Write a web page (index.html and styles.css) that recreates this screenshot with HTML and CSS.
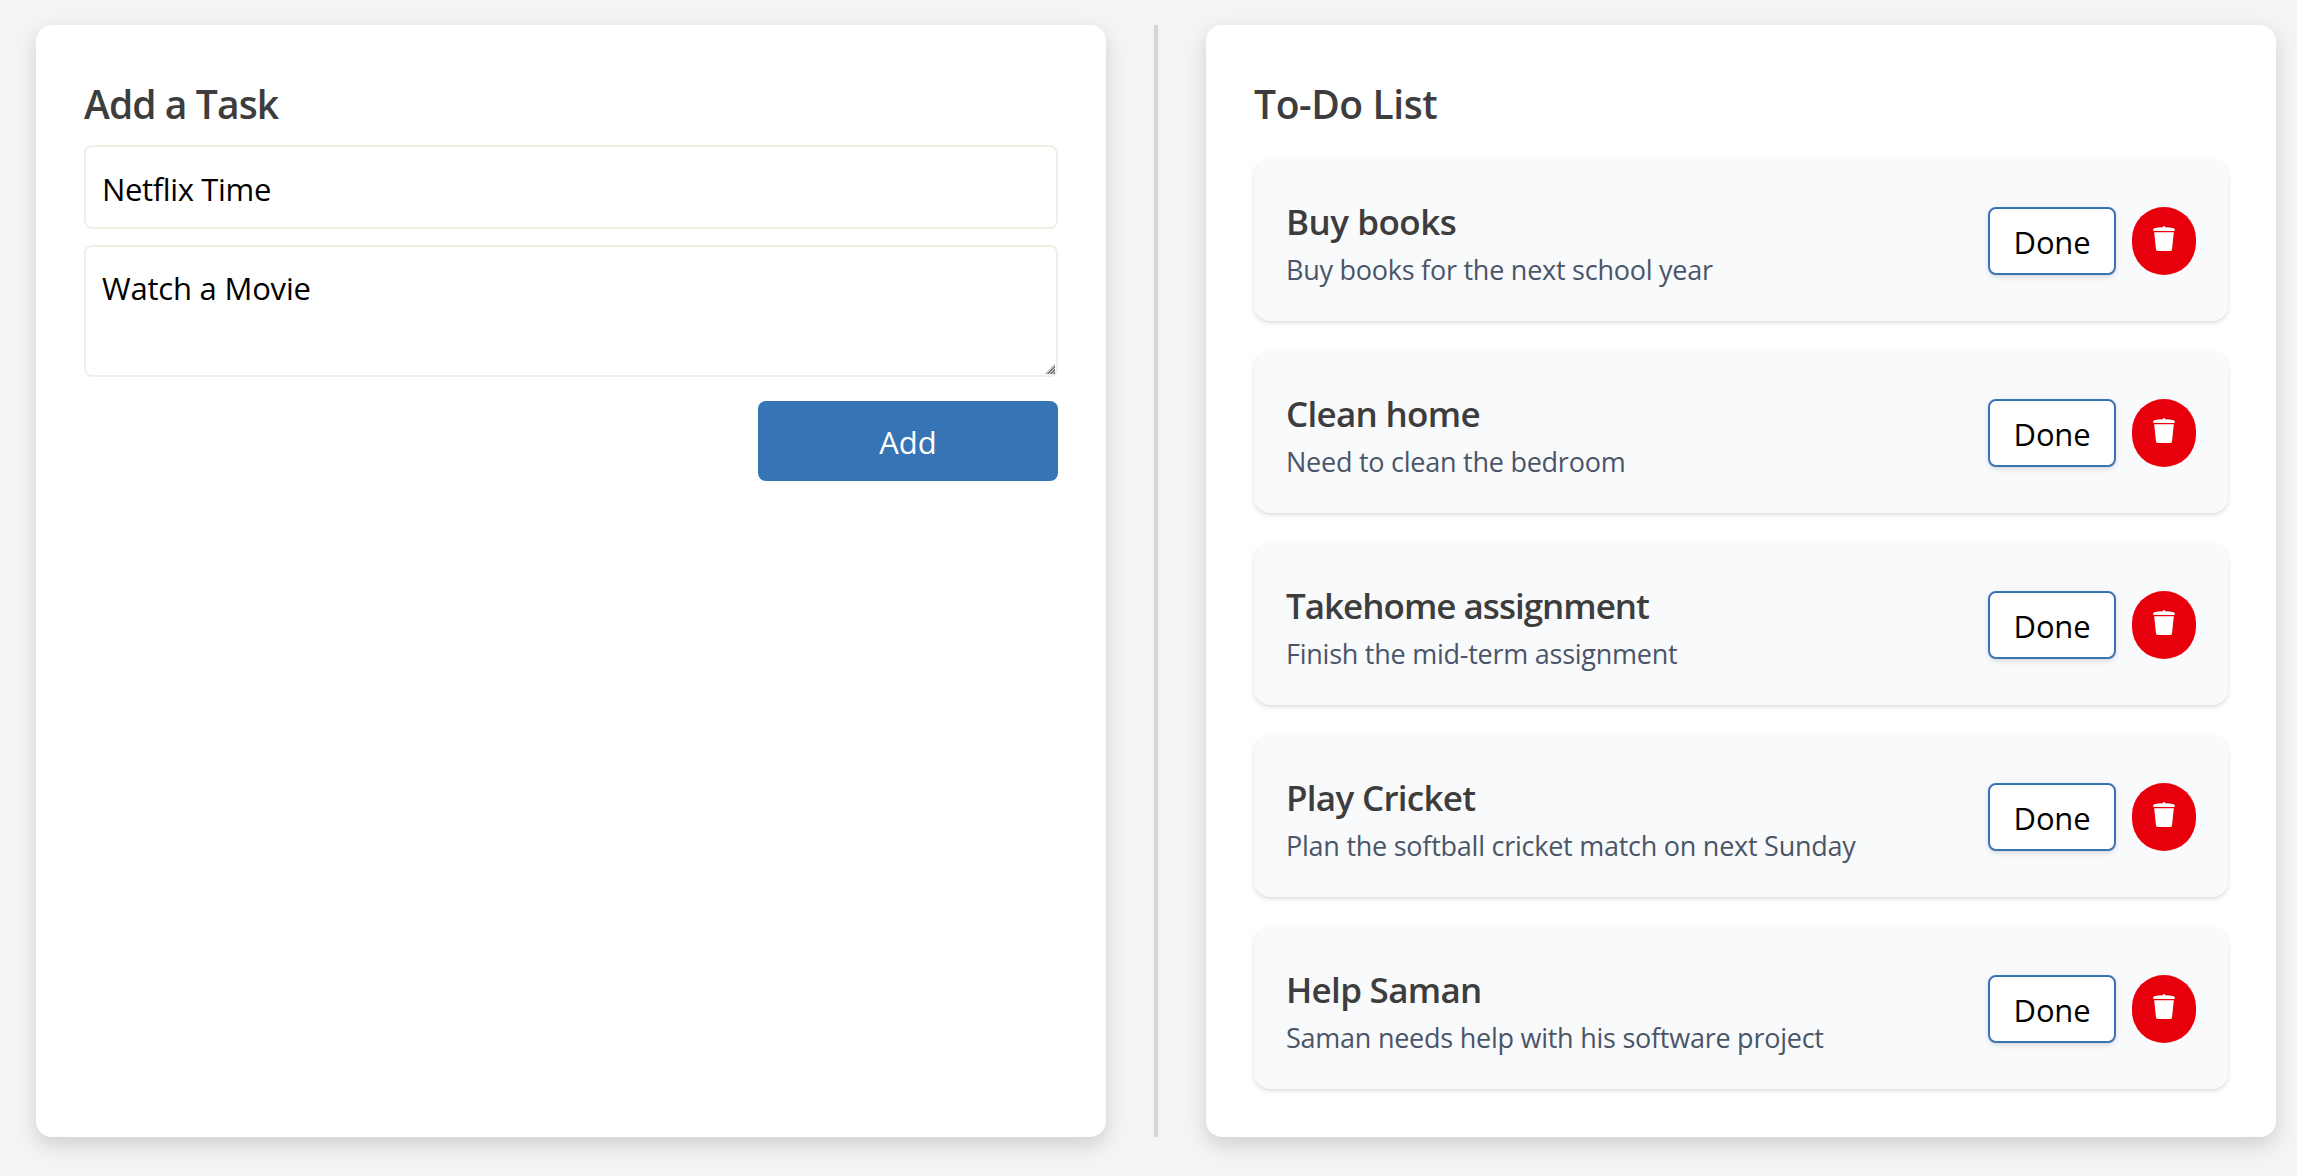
FILE: index.html
```html
<!DOCTYPE html>
<html lang="en">
<head>
<meta charset="utf-8">
<title>To-Do</title>
<link rel="stylesheet" href="styles.css">
</head>
<body>
<svg class="sprite" aria-hidden="true">
  <symbol id="trash" viewBox="0 0 22 26">
    <path d="M0.3 4.9V3.2Q0.3 2.4 1.4 2.2Q5.5 1.4 10 1.3V0.7Q10 0 11 0Q12 0 12 0.7V1.3Q16.5 1.4 20.6 2.2Q21.7 2.4 21.7 3.2V4.9Z"/>
    <path d="M1.2 6.3H20.8L19 23.6Q18.8 25 17.4 25H4.6Q3.2 25 3 23.6Z"/>
  </symbol>
</svg>
<main class="board">
  <section class="panel">
    <h1 class="heading heading-tight">Add a Task</h1>
    <form class="task-form">
      <input class="field" type="text" value="Netflix Time" aria-label="Title">
      <div class="area-wrap">
        <textarea class="field field-area" aria-label="Description">Watch a Movie</textarea>
      </div>
      <button class="add" type="button">Add</button>
    </form>
  </section>
  <div class="divider"></div>
  <section class="panel">
    <h1 class="heading">To-Do List</h1>
    <ul class="list">
      <li class="item">
        <div class="info"><h2 class="name name-loose">Buy books</h2><p class="desc">Buy books for the next school year</p></div>
        <button class="done">Done</button>
        <button class="remove" aria-label="Delete"><svg class="icon"><use href="#trash"/></svg></button>
      </li>
      <li class="item">
        <div class="info"><h2 class="name">Clean home</h2><p class="desc">Need to clean the bedroom</p></div>
        <button class="done">Done</button>
        <button class="remove" aria-label="Delete"><svg class="icon"><use href="#trash"/></svg></button>
      </li>
      <li class="item">
        <div class="info"><h2 class="name name-tight">Takehome assignment</h2><p class="desc">Finish the mid-term assignment</p></div>
        <button class="done">Done</button>
        <button class="remove" aria-label="Delete"><svg class="icon"><use href="#trash"/></svg></button>
      </li>
      <li class="item">
        <div class="info"><h2 class="name">Play Cricket</h2><p class="desc">Plan the softball cricket match on next Sunday</p></div>
        <button class="done">Done</button>
        <button class="remove" aria-label="Delete"><svg class="icon"><use href="#trash"/></svg></button>
      </li>
      <li class="item">
        <div class="info"><h2 class="name">Help Saman</h2><p class="desc">Saman needs help with his software project</p></div>
        <button class="done">Done</button>
        <button class="remove" aria-label="Delete"><svg class="icon"><use href="#trash"/></svg></button>
      </li>
    </ul>
  </section>
</main>
</body>
</html>
```
FILE: styles.css
```css
* {
  box-sizing: border-box;
  margin: 0;
  padding: 0;
}

body {
  background: #f4f4f4;
  font-family: "Segoe UI", "Open Sans", "Noto Sans", sans-serif;
  overflow: hidden;
}

button, input, textarea {
  font: inherit;
}

.sprite {
  display: none;
}

.board {
  display: flex;
  height: 1176px;
  padding: 25px 21px 39px 36px;
  gap: 48px;
}

.panel {
  flex: 1 1 0;
  padding: 48px;
  border-radius: 16px;
  background: #fff;
  box-shadow: 0 8px 20px rgba(0, 0, 0, 0.15);
}

.divider {
  width: 4px;
  background: #d1d5dc;
}

.heading {
  height: 72px;
  font-size: 39px;
  line-height: 62px;
  font-weight: 600;
  letter-spacing: -0.4px;
  color: #3d3d3d;
}

.heading-tight {
  letter-spacing: -0.9px;
}

.task-form {
  display: flex;
  flex-direction: column;
}

.field {
  display: block;
  width: 100%;
  height: 84px;
  padding: 18px 16px 14px;
  border: 2px solid #f1eee6;
  border-radius: 8px;
  background: #fff;
  color: #000;
  font-size: 31px;
  line-height: 48px;
  letter-spacing: -0.35px;
  outline: none;
}

.area-wrap {
  position: relative;
  margin: 16px 0 24px;
}

.field-area {
  height: 132px;
  padding-top: 17px;
  letter-spacing: -0.2px;
  overflow: hidden;
  resize: none;
}

/* Diagonal resize grip in the corner of the text area */
.area-wrap::after {
  content: "";
  position: absolute;
  right: 3px;
  bottom: 3px;
  width: 10px;
  height: 10px;
  background: repeating-linear-gradient(135deg, #777 0 1px, #ddd 1px 2.12px);
  clip-path: polygon(100% 0, 100% 100%, 0 100%);
}

.add {
  align-self: flex-end;
  width: 300px;
  height: 80px;
  padding-top: 2px;
  border: 0;
  border-radius: 8px;
  background: #3774b5;
  color: #fff;
  font-size: 31px;
  line-height: 48px;
}

.list {
  display: flex;
  flex-direction: column;
  gap: 31px;
  padding-top: 15px;
  list-style: none;
}

.item {
  display: flex;
  align-items: center;
  height: 161px;
  padding: 0 32px;
  border-radius: 16px;
  background: #f9fafc;
  box-shadow: 0 2px 6px rgba(0, 0, 0, 0.1), 0 2px 4px -2px rgba(0, 0, 0, 0.1);
}

.info {
  flex: 1;
  padding-top: 2px;
}

.name {
  font-size: 35px;
  line-height: 56px;
  font-weight: 600;
  letter-spacing: -0.7px;
  color: #3d3d3d;
}

.name-loose {
  letter-spacing: -0.5px;
}

.name-tight {
  letter-spacing: -1px;
}

.desc {
  font-size: 27px;
  line-height: 40px;
  letter-spacing: -0.25px;
  color: #4a5568;
}

.done {
  width: 128px;
  height: 68px;
  padding-top: 2px;
  margin-right: 16px;
  border: 2px solid #3774b5;
  border-radius: 8px;
  background: #fff;
  color: #000;
  font-size: 31px;
  line-height: 48px;
  letter-spacing: -0.2px;
  box-shadow: 0 2px 6px rgba(0, 0, 0, 0.1), 0 2px 4px -2px rgba(0, 0, 0, 0.1);
}

.remove {
  display: flex;
  justify-content: center;
  width: 64px;
  height: 68px;
  padding-top: 19px;
  border: 0;
  border-radius: 32px;
  background: #e7000b;
}

.icon {
  width: 22px;
  height: 26px;
  fill: #fff;
}
```
